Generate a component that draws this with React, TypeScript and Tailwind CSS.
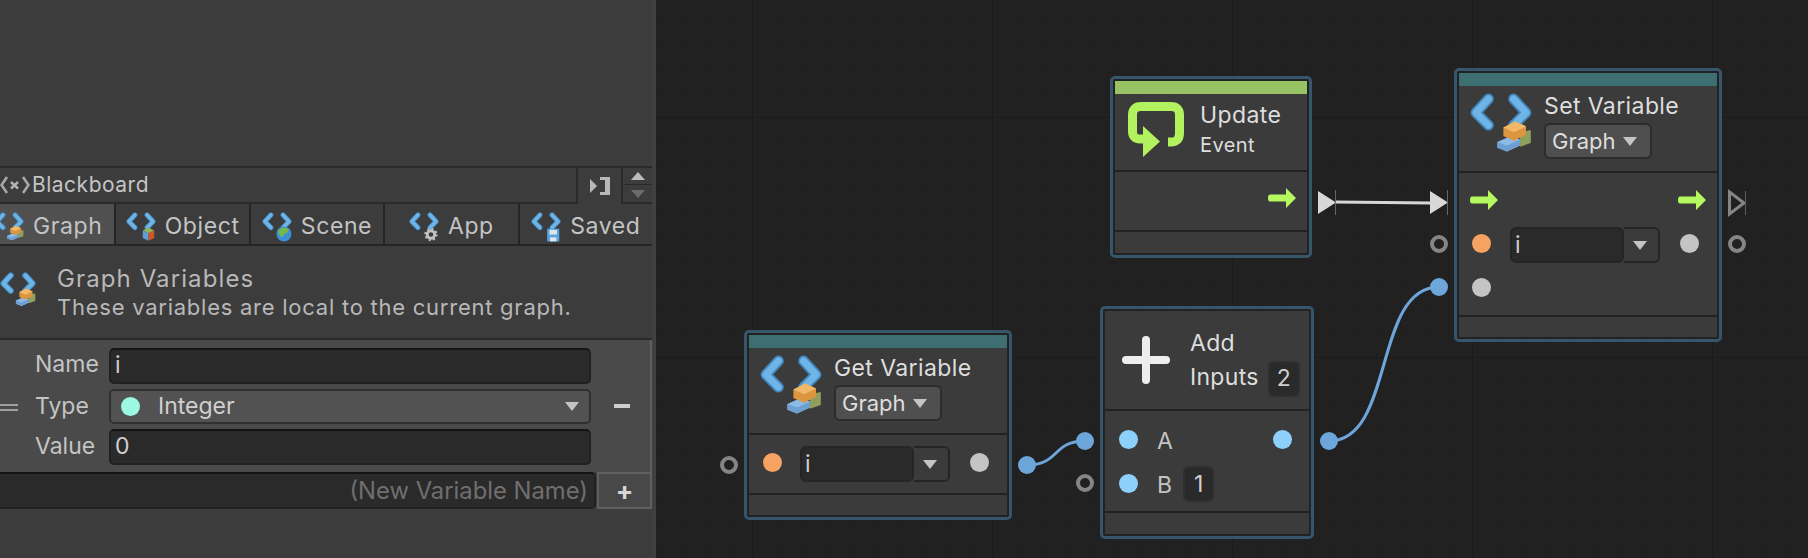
import React from 'react';

type Badge = 'graph' | 'object' | 'scene' | 'app' | 'saved';

function VarIcon({ badge, size = 52 }: { badge: Badge; size?: number }) {
  return (
    <svg width={size} height={size} viewBox="0 0 52 52" className="shrink-0 overflow-visible">
      <path d="M15.5 5 L5 16.5 L15.5 27" fill="none" stroke="#3f87bd" strokeWidth="9" strokeLinecap="round" strokeLinejoin="round" />
      <path d="M36.5 5 L47 16.5 L36.5 27" fill="none" stroke="#3f87bd" strokeWidth="9" strokeLinecap="round" strokeLinejoin="round" />
      <path d="M15.5 5 L5 16.5 L15.5 27" fill="none" stroke="#6fb4e6" strokeWidth="6" strokeLinecap="round" strokeLinejoin="round" />
      <path d="M36.5 5 L47 16.5 L36.5 27" fill="none" stroke="#6fb4e6" strokeWidth="6" strokeLinecap="round" strokeLinejoin="round" />
      {badge === 'graph' && (
        <g>
          <path d="M42 33 L51 31 L51 42 L42 45 Z" fill="#8f9f5c" />
          <path d="M23 41 L34 36 L42 39 L42 44 L31 49 L23 46 Z" fill="#8bbce8" />
          <path d="M23 41 L31 44 L42 39 L42 44 L31 49 L23 46 Z" fill="#6f9fd0" />
          <path d="M28 29 L38 24 L47 28 L47 35 L37 40 L28 36 Z" fill="#dc9640" />
          <path d="M28 29 L37 33 L47 28 L38 24 Z" fill="#f0b868" />
        </g>
      )}
      {badge === 'object' && (
        <g>
          <path d="M29 32 L39 27 L49 32 L39 37 Z" fill="#8fb35a" />
          <path d="M29 32 L39 37 L39 50 L29 45 Z" fill="#5da0d8" />
          <path d="M39 37 L49 32 L49 45 L39 50 Z" fill="#d2552e" />
        </g>
      )}
      {badge === 'scene' && (
        <g>
          <circle cx="38" cy="38" r="13" fill="#3f8fd6" />
          <path d="M29 31 Q38 23 46 30 Q46 38 39 37 Q37 45 32 42 Q27 36 29 31 Z" fill="#74b84a" />
        </g>
      )}
      {badge === 'app' && (
        <g>
          <circle cx="38" cy="39" r="6.5" fill="none" stroke="#c2c2c2" strokeWidth="5" />
          <circle cx="38" cy="39" r="10" fill="none" stroke="#c2c2c2" strokeWidth="3" strokeDasharray="3.5 4.35" />
        </g>
      )}
      {badge === 'saved' && (
        <g>
          <path d="M28 29 H49 V51 H28 Z" fill="#5aa4dc" />
          <path d="M32 31 H45 V39 H32 Z" fill="#dde4ea" />
          <path d="M33 44 H44 V51 H33 Z" fill="#dde4ea" />
        </g>
      )}
    </svg>
  );
}

function Tab({ label, badge, active }: { label: string; badge: Badge; active?: boolean }) {
  return (
    <div className={`flex items-center justify-center gap-[9px] pt-[5px] ${active ? 'bg-[#505050]' : 'bg-[#3c3c3c]'}`}>
      <VarIcon badge={badge} size={30} />
      <span className="text-[23px] tracking-[0.6px] text-[#c4c4c4]">{label}</span>
    </div>
  );
}

function Field({ children }: { children?: React.ReactNode }) {
  return (
    <div className="flex h-[36px] flex-1 items-center rounded-[5px] border-2 border-[#212121] border-t-[#141414] bg-[#2a2a2a] px-[4px] text-[23px] text-[#d0d0d0]">
      {children}
    </div>
  );
}

function Arrow() {
  return (
    <svg width="28" height="20" viewBox="0 0 28 20" className="shrink-0">
      <path d="M2 6.5 H18 V0 L28 10 L18 20 V13.5 H2 Q0 13.5 0 10 Q0 6.5 2 6.5 Z" fill="#b5f95f" />
    </svg>
  );
}

function Dot({ color }: { color: string }) {
  return <span className={`block size-[19px] shrink-0 rounded-full ${color}`} />;
}

function Caret({ className = '' }: { className?: string }) {
  return <span className={`block h-0 w-0 border-x-[7px] border-t-[9px] border-x-transparent border-t-[#c4c4c4] ${className}`} />;
}

function GraphSelect() {
  return (
    <div className="mt-[4px] flex h-[36px] w-[108px] items-center gap-[7px] rounded-[6px] border-2 border-[#2c2c2c] bg-[#4f4f4f] pl-[6px] text-[22px] text-[#dedede]">
      Graph <Caret />
    </div>
  );
}

function VariableField() {
  return (
    <div className="flex h-[36px] w-[150px] shrink-0">
      <div className="w-[114px] rounded-[6px] border-2 border-[#252525] bg-[#2a2a2a] pl-[3px] text-[23px] leading-[32px] text-[#d0d0d0]">i</div>
      <div className="flex flex-1 items-center justify-center rounded-r-[6px] border-2 border-l-0 border-[#252525] bg-[#3b3b3b]">
        <Caret className="mr-[2px]" />
      </div>
    </div>
  );
}

function Node({ className, children }: { className: string; children: React.ReactNode }) {
  return (
    <div className={`absolute flex flex-col rounded-[5px] border-[3px] border-[#35566b] bg-[#3b3b3b] p-[1px] outline-2 -outline-offset-[5px] outline-[#222222] ${className}`}>
      {children}
    </div>
  );
}

function Ring({ className }: { className: string }) {
  return <span className={`absolute block size-[18px] rounded-full border-[4px] border-[#858585] ${className}`} />;
}

function Port({ className }: { className: string }) {
  return <span className={`absolute block size-[18px] rounded-full bg-[#6ca6da] ${className}`} />;
}

export default function App() {
  return (
    <div className="flex h-[558px] w-[1808px] overflow-hidden bg-[#212121] font-['Inter',sans-serif]">
      {/* Blackboard panel */}
      <aside className="flex h-full w-[656px] shrink-0 flex-col overflow-hidden border-r-[4px] border-[#404040] bg-[#3c3c3c]">
        <div className="h-[166px] shrink-0" />

        <div className="flex h-[38px] shrink-0 border-t-2 border-[#2a2a2a]">
          <div className="flex flex-1 items-center gap-[2px] border-b-2 border-r-2 border-[#2a2a2a] text-[21px] tracking-[0.5px] text-[#c4c4c4]">
            <svg width="30" height="20" viewBox="0 0 30 20" className="shrink-0">
              <path d="M7 2 L1.5 10 L7 18 M23 2 L28.5 10 L23 18" fill="none" stroke="#a8a8a8" strokeWidth="2.6" />
              <path d="M11 7 L18 13.5 M18 7 L11 13.5" fill="none" stroke="#b4b4b4" strokeWidth="2.4" />
            </svg>
            Blackboard
          </div>
          <div className="flex w-[43px] items-center justify-center">
            <svg width="20" height="20" viewBox="0 0 20 20">
              <path d="M0 3 L7 10 L0 17 Z" fill="#b8b8b8" />
              <path d="M10 1 H20 V19 H10 V16 H15 V4 H10 Z" fill="#b8b8b8" />
            </svg>
          </div>
          <div className="flex w-[31px] flex-col border-l-2 border-[#2a2a2a]">
            <div className="flex h-[17px] items-center justify-center border-b border-[#2a2a2a]">
              <span className="block h-0 w-0 border-x-[7px] border-b-[8px] border-x-transparent border-b-[#bdbdbd]" />
            </div>
            <div className="flex flex-1 items-center justify-center border-b-2 border-[#2a2a2a]">
              <span className="block h-0 w-0 border-x-[7px] border-t-[8px] border-x-transparent border-t-[#6c6c6c]" />
            </div>
          </div>
        </div>

        <div className="-ml-[18px] grid h-[42px] shrink-0 grid-cols-5 gap-[2px] border-b-[2px] border-[#252525] bg-[#252525]">
          <Tab label="Graph" badge="graph" active />
          <Tab label="Object" badge="object" />
          <Tab label="Scene" badge="scene" />
          <Tab label="App" badge="app" />
          <Tab label="Saved" badge="saved" />
        </div>

        <div className="flex h-[94px] shrink-0 items-center border-b-2 border-[#2a2a2a]">
          <div className="-mt-[4px]">
            <VarIcon badge="graph" size={36} />
          </div>
          <div className="ml-[21px] pt-[1px] text-[#b8b8b8]">
            <div className="text-[24px] leading-[29px] tracking-[1.1px]">Graph Variables</div>
            <div className="text-[22px] leading-[29px] tracking-[0.75px]">These variables are local to the current graph.</div>
          </div>
        </div>

        <div className="relative flex h-[132px] shrink-0 items-center border-r-2 border-[#5f5f5f] bg-[#4a4a4a] pl-[35px] pr-[2px]">
          <span className="absolute left-0 top-[64px] h-[7px] w-[18px] border-y-2 border-[#a0a0a0]" />
          <div className="flex w-[556px] flex-col gap-[5px] text-[23px] text-[#c4c4c4]">
            <div className="flex items-center">
              <span className="w-[74px] -translate-y-[1px]">Name</span>
              <Field>i</Field>
            </div>
            <div className="flex items-center">
              <span className="w-[74px]">Type</span>
              <div className="flex h-[35px] flex-1 items-center rounded-[5px] border-2 border-[#303030] bg-[#525252] px-[10px] text-[23px] text-[#d0d0d0]">
                <Dot color="bg-[#9cf7e3]" />
                <span className="ml-[18px] flex-1">Integer</span>
                <Caret />
              </div>
            </div>
            <div className="flex items-center">
              <span className="w-[74px]">Value</span>
              <Field>0</Field>
            </div>
          </div>
          <span className="ml-[23px] block h-[4px] w-[16px] bg-[#cfcfcf]" />
        </div>

        <div className="flex h-[37px] shrink-0 gap-[1px] bg-[#3c3c3c]">
          <div className="flex flex-1 items-center justify-end rounded-r-[5px] border-2 border-l-0 border-[#212121] border-t-[#141414] bg-[#2a2a2a] pr-[6px] text-[23.8px] text-[#6f6f6f]">
            (New Variable Name)
          </div>
          <div className="flex w-[55px] items-center justify-center border-2 border-[#606060] bg-[#484848] text-[26px] font-bold text-[#d8d8d8]">+</div>
        </div>
      </aside>

      {/* Graph canvas */}
      <main className="relative h-full flex-1 bg-[#212121] bg-[linear-gradient(#1b1b1b_1px,transparent_1px),linear-gradient(90deg,#1b1b1b_1px,transparent_1px),linear-gradient(#1f1f1f_1px,transparent_1px),linear-gradient(90deg,#1f1f1f_1px,transparent_1px)] bg-[size:240px_240px,240px_240px,24px_24px,24px_24px] bg-[position:0_117px,96px_0,0_21px,0_0]">
        <div className="absolute left-[-656px] top-0 h-[558px] w-[1808px]">
          <svg width="1808" height="558" viewBox="0 0 1808 558" className="absolute inset-0">
            <path d="M1027 465 C1060 465 1052 441 1085 441" fill="none" stroke="#6ca6da" strokeWidth="3" />
            <path d="M1329 441 C1395 441 1373 287 1439 287" fill="none" stroke="#6ca6da" strokeWidth="3" />
            <path d="M1336 202 L1431 203" stroke="#d8d8d8" strokeWidth="3" fill="none" />
            <path d="M1318 191 L1336 202.5 L1318 214 Z" fill="#d8d8d8" />
            <path d="M1335.5 190 V215" stroke="#666666" strokeWidth="1" />
            <path d="M1430 191 L1448 202.5 L1430 214 Z" fill="#d8d8d8" />
            <path d="M1447.5 190 V215" stroke="#666666" strokeWidth="1" />
            <path d="M1729.5 192 L1744 203 L1729.5 214 Z" fill="none" stroke="#858585" strokeWidth="3" />
            <path d="M1745.5 191 V215" stroke="#5c5c5c" strokeWidth="1" />
          </svg>

          <Ring className="left-[720px] top-[456px]" />
          <Ring className="left-[1076px] top-[474px]" />
          <Ring className="left-[1430px] top-[235px]" />
          <Ring className="left-[1728px] top-[235px]" />
          <Port className="left-[1018px] top-[456px]" />
          <Port className="left-[1076px] top-[432px]" />
          <Port className="left-[1320px] top-[432px]" />
          <Port className="left-[1430px] top-[278px]" />

          {/* Update */}
          <Node className="left-[1110px] top-[76px] h-[182px] w-[202px]">
            <div className="mx-[1px] h-[14px] shrink-0 bg-[#97c365]" />
            <div className="flex h-[78px] shrink-0 items-start border-b-2 border-[#222222] pl-[14px] pt-[6px]">
              <svg width="56" height="56" viewBox="0 0 56 56" className="mt-[2px] shrink-0">
                <path d="M15 37 H12 Q4.5 37 4.5 29 V13 Q4.5 4.5 13 4.5 H43 Q51.5 4.5 51.5 13 V31 Q51.5 40 43 40 H40" fill="none" stroke="#b2f25e" strokeWidth="9" strokeLinejoin="round" />
                <path d="M15 24 L32 39.5 L15 55 Z" fill="#b2f25e" />
              </svg>
              <div className="ml-[16px] text-[#dedede]">
                <div className="text-[23px] leading-[30px] tracking-[0.4px]">Update</div>
                <div className="text-[20px] leading-[30px] tracking-[0.4px]">Event</div>
              </div>
            </div>
            <div className="flex h-[60px] shrink-0 items-start justify-end border-b-2 border-[#222222] pr-[12px] pt-[16px]">
              <Arrow />
            </div>
          </Node>

          {/* Set Variable */}
          <Node className="left-[1454px] top-[68px] h-[274px] w-[268px]">
            <div className="mx-[1px] mt-[1px] h-[13px] shrink-0 bg-[#3c6e72]" />
            <div className="flex h-[87px] shrink-0 border-b-2 border-[#222222] pl-[12px] pt-[3px]">
              <div className="mt-[4px]"><VarIcon badge="graph" size={62} /></div>
              <div className="ml-[12px]">
                <div className="translate-y-[2px] text-[23px] leading-[30px] tracking-[0.4px] text-[#dedede]">Set Variable</div>
                <GraphSelect />
              </div>
            </div>
            <div className="h-[144px] shrink-0 border-b-2 border-[#222222] px-[12px] pt-[17px]">
              <div className="flex h-[22px] justify-between"><Arrow /><Arrow /></div>
              <div className="mt-[13px] flex h-[40px] items-center">
                <div className="-mt-[4px]"><Dot color="bg-[#f5a262] ml-[2px]" /></div>
                <div className="ml-[19px]"><VariableField /></div>
                <div className="-mt-[4px]"><Dot color="bg-[#c4c4c4] ml-[20px]" /></div>
              </div>
              <div className="mt-[13px]"><Dot color="bg-[#c4c4c4] ml-[2px]" /></div>
            </div>
          </Node>

          {/* Get Variable */}
          <Node className="left-[744px] top-[330px] h-[190px] w-[268px]">
            <div className="mx-[1px] h-[14px] shrink-0 bg-[#3c6e72]" />
            <div className="flex h-[87px] shrink-0 border-b-2 border-[#222222] pl-[12px] pt-[3px]">
              <div className="mt-[4px]"><VarIcon badge="graph" size={62} /></div>
              <div className="ml-[12px]">
                <div className="translate-y-[2px] text-[23px] leading-[30px] tracking-[0.4px] text-[#dedede]">Get Variable</div>
                <GraphSelect />
              </div>
            </div>
            <div className="flex h-[60px] shrink-0 items-center border-b-2 border-[#222222] pl-[15px] pr-[14px]">
              <div className="-mt-[4px]"><Dot color="bg-[#f5a262]" /></div>
              <div className="ml-[18px]"><VariableField /></div>
              <div className="-mt-[4px]"><Dot color="bg-[#c4c4c4] ml-[20px]" /></div>
            </div>
          </Node>

          {/* Add Inputs */}
          <Node className="left-[1100px] top-[306px] h-[233px] w-[214px]">
            <div className="flex h-[101px] shrink-0 items-center border-b-2 border-[#222222] pl-[17px]">
              <svg width="50" height="50" viewBox="0 0 50 50" className="shrink-0">
                <path d="M25 5 V45 M5 25 H45" stroke="#eeeeee" strokeWidth="8" strokeLinecap="round" />
              </svg>
              <div className="ml-[19px] mt-[3px] w-[110px] text-[23px] tracking-[0.3px] text-[#dedede]">
                <div className="leading-[33px]">Add</div>
                <div className="flex items-center justify-between leading-[33px]">
                  Inputs
                  <span className="flex h-[36px] w-[32px] translate-y-[1px] items-center justify-center rounded-[6px] border-2 border-[#2f2f2f] bg-[#2a2a2a] text-[#d0d0d0]">2</span>
                </div>
              </div>
            </div>
            <div className="h-[102px] shrink-0 border-b-2 border-[#222222] pl-[15px] pr-[18px] pt-[18px]">
              <div className="flex h-[20px] items-center text-[23px] text-[#c4c4c4]">
                <Dot color="bg-[#8cd0fb]" />
                <span className="ml-[19px] flex-1 translate-y-[2px]">A</span>
                <Dot color="bg-[#8cd0fb]" />
              </div>
              <div className="mt-[24px] flex h-[20px] items-center text-[23px] text-[#c4c4c4]">
                <Dot color="bg-[#8cd0fb]" />
                <span className="ml-[19px] translate-y-[2px]">B</span>
                <span className="ml-[11px] flex h-[36px] w-[31px] translate-y-[1px] items-center justify-center rounded-[6px] border-2 border-[#2f2f2f] bg-[#2a2a2a] text-[#d0d0d0]">1</span>
              </div>
            </div>
          </Node>
        </div>
      </main>
    </div>
  );
}
